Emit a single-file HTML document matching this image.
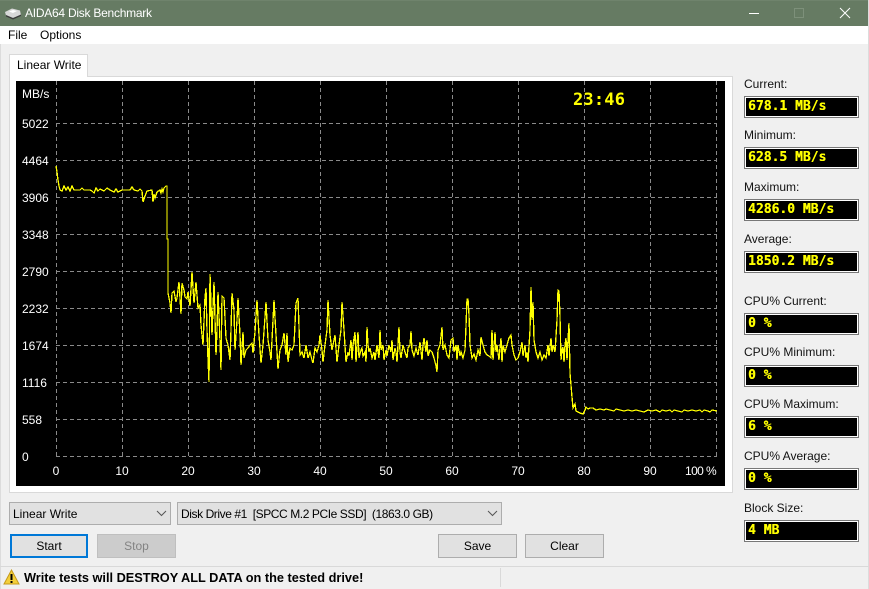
<!DOCTYPE html>
<html><head><meta charset="utf-8"><style>
html,body{margin:0;padding:0}
body{width:869px;height:589px;position:relative;overflow:hidden;background:#f0f0f0;font:12px "Liberation Sans",sans-serif;color:#000}
.a{position:absolute;white-space:nowrap}
.lb{position:absolute;left:744px;line-height:14px;color:#111}
.v{position:absolute;left:744px;width:115px;height:22px;box-sizing:border-box;border:1px solid #777;outline:1px solid #fff;outline-offset:-2px;background:#000;color:#ff0;font:bold 13px/20px "DejaVu Sans Mono",monospace;padding-left:3px;white-space:nowrap;overflow:hidden;text-shadow:.3px 0 0 #ff0}
.ax{position:absolute;color:#fff;line-height:14px;font-size:12px;white-space:nowrap}
.y{left:22px}
.x{top:464px;width:30px;text-align:center}
.btn{position:absolute;top:534px;height:24px;box-sizing:border-box;border:1px solid #adadad;background:#e1e1e1;text-align:center;line-height:23px}
.cb{position:absolute;top:502px;height:23px;box-sizing:border-box;border:1px solid #adadad;background:#e1e1e1;line-height:22px;padding-left:3px;white-space:nowrap}
</style></head><body>
<div class="a" style="left:0;top:0;width:869px;height:26px;background:#667b63;border-top:1px solid #6f836c;box-sizing:border-box"></div>
<svg class="a" style="left:4px;top:6px" width="18" height="14" viewBox="0 0 18 14"><path d="M1 6 8 2.5 16 4.5 17 9 9 12 2 9.5Z" fill="#d8d8d8"/><path d="M2 9 9 12 17 8.5 17 10 9 13.5 2 10.5Z" fill="#3c3c3c"/><path d="M5 5.5 9 4 13 5 9 7Z" fill="#fff"/></svg>
<div class="a" style="left:25px;top:5px;color:#fff;line-height:16px;letter-spacing:-.25px">AIDA64 Disk Benchmark</div>
<svg class="a" style="left:740px;top:0" width="129" height="26"><path d="M9 13.5H19" stroke="#fff" fill="none"/><rect x="54.5" y="8.5" width="9" height="9" fill="none" stroke="#7d907a"/><path d="M100 8 110 18M110 8 100 18" stroke="#fff" fill="none"/></svg>
<div class="a" style="left:0;top:26px;width:869px;height:18px;background:#fff"></div>
<div class="a" style="left:8px;top:28px;line-height:15px">File</div>
<div class="a" style="left:40px;top:28px;line-height:15px">Options</div>
<div class="a" style="left:0;top:44px;width:1px;height:545px;background:#dcdcdc"></div>
<div class="a" style="left:868px;top:0;width:1px;height:589px;background:#dcdcdc"></div>

<div class="a" style="left:9px;top:76px;width:724px;height:417px;box-sizing:border-box;border:1px solid #d9d9d9;background:#fff"></div>
<div class="a" style="left:9px;top:54px;width:79px;height:23px;box-sizing:border-box;border:1px solid #d9d9d9;border-bottom:0;background:#fff;padding-left:7px;line-height:20px">Linear Write</div>
<div class="a" style="left:16px;top:81px;width:709px;height:405px;background:#000"></div>
<svg class="a" style="left:0;top:0" width="869" height="589">
<g stroke="#8a8a8a" stroke-dasharray="4 3" fill="none" shape-rendering="crispEdges">
<path d="M56.5 81V456M122.5 81V456M188.5 81V456M254.5 81V456M320.5 81V456M386.5 81V456M452.5 81V456M518.5 81V456M584.5 81V456M650.5 81V456M716.5 81V456"/>
<path d="M56 123.5H717M56 160.5H717M56 197.5H717M56 234.5H717M56 271.5H717M56 308.5H717M56 345.5H717M56 382.5H717M56 419.5H717M56 456.5H717"/>
</g>
<polyline fill="none" stroke="#ff0" stroke-width="1.3" shape-rendering="crispEdges" points="56,166 57,172 58,180 59,186 60,190 62,191 64,186 66,190 68,187 70,191 72,186 74,190 80,190 82,188 84,190 90,190 92,191 94,193 96,188 98,191 100,189 104,191 107,188 110,190 114,192 116,189 118,192 122,190 126,190 130,190 132,187 134,190 138,191 140,189 142,191 143,202 145,196 147,191 152,190 153,202 154,194 155,198 157,192 160,190 161,193 162,189 163,192 164,188 166,186 167,186 167,239 168,239 168,293 170,303 171,313 172,293 174,291 176,302 177,298 179,282 181,314 182,283 184,290 185,297 187,299 188,292 190,306 192,272 194,303 196,282 198,308 200,305 201,325 203,345 205,297 206,288 207,330 208,360 209,382 210,274 212,335 214,282 216,355 217,330 218,292 220,340 221,370 222,296 224,298 226,338 228,345 230,360 231,330 232,293 234,310 235,350 237,320 238,298 240,335 241,365 243,332 244,358 246,350 248,348 250,345 252,343 253,353 255,332 257,300 259,335 261,363 263,345 265,317 266,302 268,340 270,352 271,360 273,320 274,300 276,335 278,369 280,350 282,345 284,333 286,355 287,333 288,362 290,348 292,350 294,345 296,303 298,298 300,355 302,352 304,358 306,345 308,358 310,352 312,360 313,363 315,348 317,352 319,345 320,335 322,350 323,362 325,345 327,330 328,300 330,335 332,350 334,340 335,335 337,362 339,345 341,330 342,302 344,330 346,362 348,352 349,356 351,340 352,360 353,345 355,332 356,362 357,345 358,332 359,358 361,350 362,348 363,356 365,352 366,362 367,327 368,345 369,352 370,348 372,358 374,352 375,360 377,345 379,358 380,330 381,350 383,345 384,360 386,350 387,356 389,345 391,352 392,340 393,360 395,348 396,352 397,362 398,345 399,327 400,352 401,358 403,345 405,352 407,358 408,348 410,345 411,331 412,350 414,356 416,348 418,355 420,342 422,360 423,345 424,338 426,352 427,340 428,356 430,350 432,352 434,358 436,366 437,372 438,350 440,345 442,327 443,350 445,345 447,355 449,358 451,340 453,338 454,352 456,345 457,360 458,345 460,356 461,352 463,358 465,350 466,326 467,299 468,299 469,315 470,345 472,358 474,354 476,360 478,350 480,356 481,337 483,345 485,352 487,355 489,356 491,358 492,330 493,360 495,332 496,352 497,345 499,360 500,348 501,338 502,362 503,345 505,352 507,345 509,338 511,335 512,345 514,355 516,360 518,358 520,352 522,342 523,356 525,345 526,358 527,352 528,362 530,330 531,287 532,320 533,302 534,340 536,352 538,358 540,352 542,360 544,355 546,358 548,345 549,356 551,338 552,352 553,345 555,352 557,320 558,290 559,291 560,317 561,360 562,350 563,347 564,362 565,345 566,338 567,360 568,340 569,323 570,373 572,397 573,408 575,404 576,411 578,412 580,413 583,414 585,410 586,407 588,409 590,408 593,408 596,410 600,409 604,410 606,409 610,410 614,411 616,409 620,410 624,411 628,410 632,411 636,410 640,411 644,412 648,410 652,411 656,410 660,412 662,410 666,411 670,410 672,412 674,410 678,411 682,412 684,410 688,411 692,410 696,411 700,410 702,412 704,410 708,411 710,412 712,410 717,411"/>
</svg>
<div class="ax y" style="top:87px">MB/s</div>
<div class="ax y" style="top:117px">5022</div>
<div class="ax y" style="top:154px">4464</div>
<div class="ax y" style="top:191px">3906</div>
<div class="ax y" style="top:228px">3348</div>
<div class="ax y" style="top:265px">2790</div>
<div class="ax y" style="top:302px">2232</div>
<div class="ax y" style="top:339px">1674</div>
<div class="ax y" style="top:376px">1116</div>
<div class="ax y" style="top:413px">558</div>
<div class="ax y" style="top:450px">0</div>
<div class="ax x" style="left:41px">0</div>
<div class="ax x" style="left:107px">10</div>
<div class="ax x" style="left:173px">20</div>
<div class="ax x" style="left:239px">30</div>
<div class="ax x" style="left:305px">40</div>
<div class="ax x" style="left:371px">50</div>
<div class="ax x" style="left:437px">60</div>
<div class="ax x" style="left:503px">70</div>
<div class="ax x" style="left:569px">80</div>
<div class="ax x" style="left:635px">90</div>
<div class="ax" style="left:685px;top:464px;letter-spacing:-.6px">100 %</div>
<div class="a" style="left:573px;top:90px;color:#ff0;font:bold 17px/20px 'DejaVu Sans Mono',monospace;letter-spacing:.2px">23:46</div>

<div class="cb" style="left:9px;width:162px">Linear Write<svg class="a" style="right:3px;top:7px" width="11" height="7"><path d="M1 1 5.5 5.5 10 1" fill="none" stroke="#555"/></svg></div>
<div class="cb" style="left:177px;width:325px"><span style="letter-spacing:-.42px">Disk Drive #1&nbsp; [SPCC M.2 PCIe SSD]&nbsp; (1863.0 GB)</span><svg class="a" style="right:3px;top:7px" width="11" height="7"><path d="M1 1 5.5 5.5 10 1" fill="none" stroke="#555"/></svg></div>
<div class="btn" style="left:10px;width:78px;border:2px solid #0078d7;line-height:21px">Start</div>
<div class="btn" style="left:97px;width:79px;background:#ccc;border-color:#bfbfbf;color:#838383">Stop</div>
<div class="btn" style="left:438px;width:79px">Save</div>
<div class="btn" style="left:525px;width:79px">Clear</div>

<div class="a" style="left:0;top:566px;width:869px;height:1px;background:#d9d9d9"></div>
<div class="a" style="left:500px;top:568px;width:1px;height:19px;background:#d9d9d9"></div>
<svg class="a" style="left:3px;top:569px" width="17" height="16"><path d="M8.5 1 16 15H1Z" fill="#f4cf3a" stroke="#c59a1a"/><path d="M7.5 5h2v6h-2zM7.5 12h2v2h-2z" fill="#000"/></svg>
<div class="a" style="left:24px;top:570px;font-weight:bold;font-size:12.75px;line-height:15px">Write tests will DESTROY ALL DATA on the tested drive!</div>

<div class="lb" style="top:77px">Current:</div><div class="v" style="top:96px">678.1 MB/s</div>
<div class="lb" style="top:128px">Minimum:</div><div class="v" style="top:147px">628.5 MB/s</div>
<div class="lb" style="top:180px">Maximum:</div><div class="v" style="top:199px">4286.0 MB/s</div>
<div class="lb" style="top:232px">Average:</div><div class="v" style="top:251px">1850.2 MB/s</div>
<div class="lb" style="top:294px">CPU% Current:</div><div class="v" style="top:313px">0 %</div>
<div class="lb" style="top:345px">CPU% Minimum:</div><div class="v" style="top:365px">0 %</div>
<div class="lb" style="top:397px">CPU% Maximum:</div><div class="v" style="top:416px">6 %</div>
<div class="lb" style="top:449px">CPU% Average:</div><div class="v" style="top:468px">0 %</div>
<div class="lb" style="top:501px">Block Size:</div><div class="v" style="top:520px">4 MB</div>
</body></html>
